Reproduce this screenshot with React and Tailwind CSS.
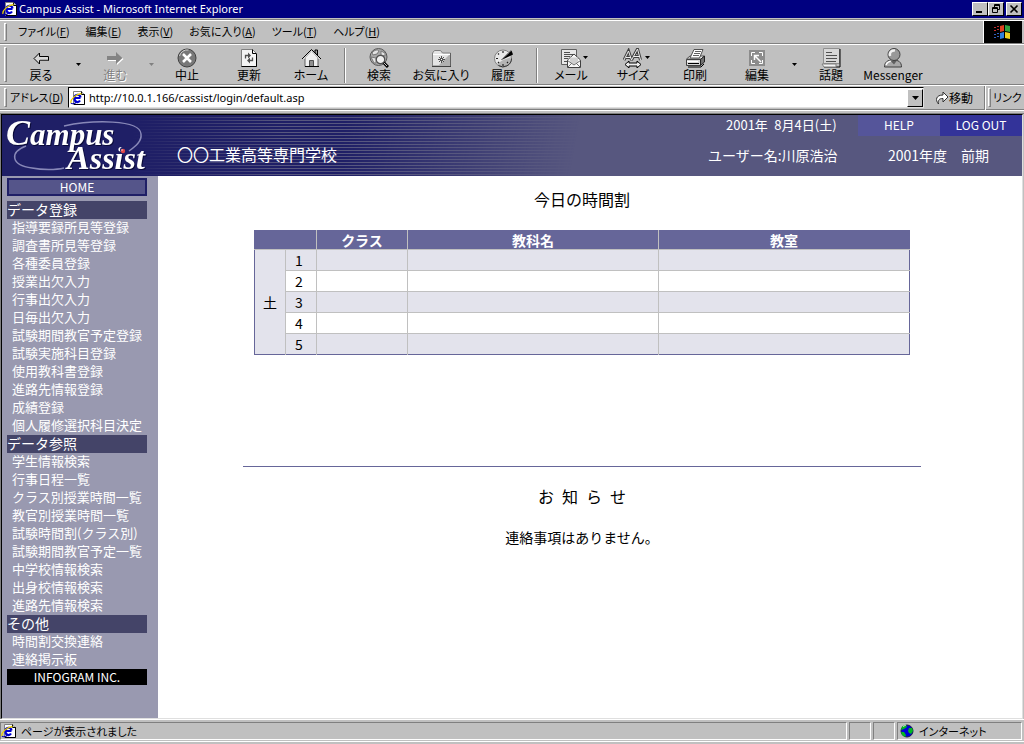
import React from 'react';

const entrySections = [
  {
    title: 'データ登録',
    items: [
      '指導要録所見等登録',
      '調査書所見等登録',
      '各種委員登録',
      '授業出欠入力',
      '行事出欠入力',
      '日毎出欠入力',
      '試験期間教官予定登録',
      '試験実施科目登録',
      '使用教科書登録',
      '進路先情報登録',
      '成績登録',
      '個人履修選択科目決定',
    ],
  },
  {
    title: 'データ参照',
    items: [
      '学生情報検索',
      '行事日程一覧',
      'クラス別授業時間一覧',
      '教官別授業時間一覧',
      '試験時間割(クラス別)',
      '試験期間教官予定一覧',
      '中学校情報検索',
      '出身校情報検索',
      '進路先情報検索',
    ],
  },
  { title: 'その他', items: ['時間割交換連絡', '連絡掲示板'] },
];

const menus = [
  ['ファイル', 'F'],
  ['編集', 'E'],
  ['表示', 'V'],
  ['お気に入り', 'A'],
  ['ツール', 'T'],
  ['ヘルプ', 'H'],
];

function PageIcon() {
  return (
    <svg className="size-4 shrink-0" viewBox="0 0 16 16" aria-hidden="true">
      <path d="M3.5 1.500h8l3 3v10h-11z" fill="#fff" stroke="#808080" />
      <path d="M14.500 4v10.500H4" fill="none" stroke="#000" />
      <path d="M11.500 1.500v3h3" fill="#c0c0c0" stroke="#000" />
      <path d="M10.500 8H4.500c0-4 5.500-4.500 6-.5M10 10.500c-1.500 2.500-5.500 2-5.500-2" fill="none" stroke="#0000d0" strokeWidth="2.200" />
      <path d="M1 13C0 9.500 6 4 11.500 3.500" fill="none" stroke="#e8d000" strokeWidth="1.300" />
      <path d="M1 13c1 1.500 4 .5 5-.5" fill="none" stroke="#0000a0" strokeWidth="1.200" />
    </svg>
  );
}

function Globe() {
  return (
    <svg className="size-4 shrink-0" viewBox="0 0 16 16" aria-hidden="true">
      <circle cx="8" cy="8" r="6" fill="#0000d8" stroke="#202040" />
      <path d="M3 3.500 7 2l1 2-3 2-3 1zM10 5l3 0 1 3-2 3-2-1-1-2zM2 9l3 0 2 3-1 2-3-2z" fill="#00b820" />
      <path d="M4 3.500 7 2" stroke="#c8f0c8" />
    </svg>
  );
}

const icons = {
  back: (
    <>
      <path d="M3 10.500 8.500 5v3.500h9v4h-9V16z" fill="#d8d8d8" stroke="#000" />
      <path d="M9 12h8" stroke="#808080" />
    </>
  ),
  forward: (
    <>
      <path d="M3 9h9V5l6.500 6-6.500 6v-4H3z" fill="#fff" />
      <path d="M2 8h9V4l6.500 6-6.500 6v-4H2z" fill="#848484" />
    </>
  ),
  stop: (
    <>
      <circle cx="10" cy="10" r="9" fill="#787878" stroke="#404040" />
      <path d="M2.500 8a8 8 0 0 1 9-6" fill="none" stroke="#d0d0d0" />
      <path d="m6 6 8 8M14 6l-8 8" stroke="#fff" strokeWidth="2.500" />
    </>
  ),
  refresh: (
    <>
      <path d="M2.500 1.500h11l4 4v13h-15z" fill="#f4f4f4" stroke="#808080" />
      <path d="M13.500 1.500v4h4M17.500 6v12.500h-15" fill="none" stroke="#000" />
      <path d="M6.500 10.500v-3h3M13.500 9.500v3h-3" fill="none" stroke="#505050" strokeWidth="1.300" />
      <path d="m9 4.500 3 3-3 3zM11 9.500l-3 3 3 3z" fill="#505050" />
    </>
  ),
  home: (
    <>
      <path d="M14 2h2.500v5L14 5z" fill="#a0a0a0" stroke="#000" />
      <path d="M4 10v8.500h13V10l-6.500-7z" fill="#f0f0f0" stroke="#606060" />
      <path d="M1 11 10.500 1.500 20 11" fill="none" stroke="#000" />
      <path d="M2.500 11 10.500 3l8 8" fill="none" stroke="#fff" />
      <path d="M8.500 18.500v-6h4v6z" fill="#909090" stroke="#505050" />
      <path d="M4 18.500h14" stroke="#000" />
    </>
  ),
  search: (
    <>
      <circle cx="9.500" cy="9" r="8.500" fill="#a8a8a8" stroke="#585858" />
      <path d="M3 5c2-3 6-4 7-2L8 6l-4 1zM2 9l5 1 0 5-2 0zM12 3l4 2v3l-4-1z" fill="#e4e4e4" stroke="#787878" />
      <path d="m14 14 5 5" stroke="#000" strokeWidth="3" />
      <path d="m14 14 4 4" stroke="#c8c8c8" />
      <circle cx="11.500" cy="11.500" r="4.200" fill="#f0f0f0" stroke="#505050" strokeWidth="1.200" />
    </>
  ),
  favorites: (
    <>
      <path d="M1.500 18V5l2-2.500h6l2 2.500h8v13z" fill="#e4e4e4" stroke="#808080" />
      <path d="m19 6-12 12h12z" fill="#b0b0b0" />
      <path d="M1 18.500h19V5" fill="none" stroke="#404040" />
      <path d="M2 6.500h17" stroke="#fff" />
      <path d="M10.500 8v7M7 11.500h7M8 9l5 5M13 9l-5 5" stroke="#404040" strokeWidth="0.900" />
      <path d="M10 11h1v1h-1z" fill="#fff" />
    </>
  ),
  history: (
    <>
      <circle cx="10" cy="10.500" r="8.500" fill="#e8e8e8" stroke="#808080" />
      <path d="M17 16a9 9 0 0 1-13 0l6-4 8-3z" fill="#b4b4b4" />
      <path d="M10 3v2M3 10.500h2M5 5.500l1 1M5 15l1-1M10 16v2M15 15l-1-1" stroke="#202020" strokeWidth="1.200" />
      <path d="m8.500 12 10-9.500 1.500 4z" fill="#000" />
      <path d="m8 12 10-10" stroke="#909090" />
      <path d="M18.500 10.500a8.500 8.500 0 0 1-13 7" fill="none" stroke="#303030" />
    </>
  ),
  mail: (
    <>
      <path d="M.5 1.500h15v15H.5z" fill="#e8e8e8" stroke="#606060" />
      <path d="M3 4.500h6M3 6.500h9M3 8.500h6M3 10.500h4M3 13.500h3" stroke="#505050" />
      <path d="m6.500 12 6.500-6 6.500 6v7.500h-13z" fill="#f8f8f8" stroke="#404040" />
      <path d="M9 9.500h8v4l-4 3-4-3z" fill="#d0d0d0" />
      <path d="m6.500 12.500 6.500 4.500 6.500-4.500M7 19l4-4M19 19l-4-4" fill="none" stroke="#707070" />
    </>
  ),
  size: (
    <>
      <path d="m1 12 4.500-9 3 9M3 9.500h5M8.500 12l6-11 3 11M11 8.500h6" fill="none" stroke="#404040" strokeWidth="3" />
      <path d="m1 12 4.500-9 3 9M3 9.500h5M8.500 12l6-11 3 11M11 8.500h6" fill="none" stroke="#eee" />
      <path d="m2 16.500 4-3.500v2h8v-2l4 3.500-4 3.500v-2H6v2z" fill="#eee" stroke="#000" />
    </>
  ),
  print: (
    <>
      <path d="M1.500 11 5 8h14l-3 3z" fill="#f0f0f0" stroke="#505050" />
      <path d="M1.500 11.500h14v6h-14z" fill="#d8d8d8" stroke="#404040" />
      <path d="m15.500 11.500 4-3.500v6l-4 3.500z" fill="#707070" stroke="#202020" />
      <path d="M5 10 9 1.500h9L14.500 10z" fill="#fff" stroke="#505050" />
      <path d="M10 3.500h6M9 5.500h6M8 7.500h6" stroke="#606060" />
      <path d="M3 15.500h11M3 19h13l3-3" fill="none" stroke="#000" />
      <path d="M2 13.500h11" stroke="#fff" />
    </>
  ),
  edit: (
    <>
      <path d="M2 2h16v16H2z" fill="#8c8c8c" />
      <path d="M4.500 8V4.500H8M12 4.500h3.500V8M15.500 12v3.500H12M8 15.500H4.500V12" fill="none" stroke="#fff" />
      <path d="M7.500 12V7.500H12M7.500 7.500 14 14" fill="none" stroke="#fff" strokeWidth="1.500" />
    </>
  ),
  discuss: (
    <>
      <path d="M2.500.5h16v15h-16z" fill="#d8d8d8" stroke="#909090" />
      <path d="M19 1v18H3" fill="none" stroke="#000" />
      <path d="M1 16h14v3H3z" fill="#f4f4f4" stroke="#808080" />
      <path d="M5 4.500h6M5 7.500h11M5 10.500h11M5 13.500h10" stroke="#505050" />
    </>
  ),
  messenger: (
    <>
      <path d="M1.500 19c0-5 3-7 8.500-7s8.500 2 8.500 7z" fill="#a8a8a8" stroke="#404040" />
      <path d="M3 17c1-3 3-4 7-4" fill="none" stroke="#fff" strokeWidth="1.500" />
      <path d="M7 12.500h7l-3 4z" fill="#606060" />
      <circle cx="11" cy="6.500" r="6" fill="#989898" stroke="#404040" />
      <path d="M7 8c-1-4 2-6 5-5.500" fill="none" stroke="#f0f0f0" strokeWidth="2.500" />
    </>
  ),
};

function Caret({ className = 'fill-black' }) {
  return (
    <svg className={`h-[3px] w-[5px] ${className}`} viewBox="0 0 5 3" aria-hidden="true">
      <path d="M0 0h5L2.500 3z" />
    </svg>
  );
}

function Tool({ icon, label, disabled, caret }) {
  return (
    <button type="button" disabled={disabled} className="flex w-[62px] shrink-0 flex-col items-center">
      <span className="relative">
        <svg className="size-5" viewBox="0 0 20 20" aria-hidden="true">{icons[icon]}</svg>
        {caret && (
          <span className="absolute top-2 left-[22px] flex">
            <Caret />
          </span>
        )}
      </span>
      <span
        className={
          disabled
            ? 'text-xs leading-[14px] whitespace-nowrap text-[#808080] [font-feature-settings:"palt"] [text-shadow:1px_1px_#fff]'
            : 'text-xs leading-[14px] whitespace-nowrap [font-feature-settings:"palt"]'
        }
      >
        {label}
      </span>
    </button>
  );
}

function DropArrow({ label, width, disabled }) {
  return (
    <button type="button" aria-label={label} disabled={disabled} className={`flex shrink-0 items-center justify-center pb-1 ${width}`}>
      <Caret className={disabled ? 'fill-[#808080]' : 'fill-black'} />
    </button>
  );
}

function Divider() {
  return <div className="mx-[2px] h-[35px] w-[2px] shrink-0 border-r border-l border-r-white border-l-[#808080]" />;
}

function Grip() {
  return <div className="my-[2px] w-[3px] shrink-0 self-stretch border border-t-white border-r-[#808080] border-b-[#808080] border-l-white" />;
}

function Band({ children, className }) {
  return (
    <div className="border-t border-[#808080]">
      <div className={`flex border-t border-white pl-1 ${className}`}>{children}</div>
    </div>
  );
}

function WindowButton({ label, children }) {
  return (
    <button
      type="button"
      aria-label={label}
      className="h-[14px] w-4 border border-t-white border-r-black border-b-black border-l-white bg-[#c0c0c0]"
    >
      <svg className="h-3 w-[14px]" viewBox="0 0 14 12" fill="none" stroke="#000" aria-hidden="true">{children}</svg>
    </button>
  );
}

function Logo() {
  return (
    <svg className="h-[61px] w-[150px] shrink-0" viewBox="0 0 150 61" role="img" aria-label="Campus Assist">
      <path d="M62 11C90 5 138 4 139 19c1 7-5 12-12 17" fill="none" stroke="#8888b8" strokeWidth="1.500" />
      <path d="M24 31C8 37 8 50 30 53c10 2 24 2 32 0" fill="none" stroke="#8888b8" strokeWidth="1.500" />
      <g className="font-['Liberation_Serif',serif] font-bold italic drop-shadow-[1px_1px_0_#0a0a38]" fill="#fff">
        <text x="4" y="30" fontSize="36">
          C<tspan fontSize="31">ampus</tspan>
        </text>
        <text x="65" y="54" fontSize="34">
          A<tspan fontSize="32">ssist</tspan>
        </text>
      </g>
      <circle cx="121" cy="35" r="3" fill="#1f1f66" />
      <circle cx="121" cy="36" r="2.200" fill="#e04848" />
      <circle cx="120" cy="35" r="0.800" fill="#ffd0d0" />
    </svg>
  );
}

function BrowserChrome() {
  return (
    <header>
      <div className="flex h-[18px] items-center bg-[#000080] pr-[2px] pl-[2px] text-white">
        <PageIcon />
        <h1 className="ml-px flex-1 font-['Noto_Sans','Noto_Sans_CJK_JP',sans-serif] text-[11px] leading-4">
          Campus Assist - Microsoft Internet Explorer
        </h1>
        <WindowButton label="最小化">
          <path d="M3 9h6" strokeWidth="2" />
        </WindowButton>
        <WindowButton label="元に戻す">
          <path d="M5.500 4.500v-3h5v5h-2M5 2.500h6M3.500 4.500h5v5h-5zM3 5.500h6" />
        </WindowButton>
        <span className="w-[2px]" />
        <WindowButton label="閉じる">
          <path d="m3.500 2.500 7 7m0-7-7 7" strokeWidth="1.600" />
        </WindowButton>
      </div>
      <div className="pt-px">
        <Band className="h-[23px] items-center">
          <Grip />
          <nav className="flex flex-1 items-center gap-4 pb-[2px] pl-[11px]">
            {menus.map(([name, key]) => (
              <button key={key} type="button" className="text-[11px] leading-5 whitespace-nowrap [font-feature-settings:'palt']">
                {name}(<u>{key}</u>)
              </button>
            ))}
          </nav>
          <div className="mr-[2px] flex w-[39px] items-center justify-center self-stretch border-l border-white bg-black">
            <svg className="h-4 w-5" viewBox="0 0 20 16" aria-hidden="true">
              <path d="m7 2 4-1v6L7 8z" fill="#e04020" />
              <path d="m12 1 5 1v6l-5-1z" fill="#30a040" />
              <path d="m7 9 4-1v6l-4 1z" fill="#3080e0" />
              <path d="m12 8 5 1v6l-5-1z" fill="#f0d020" />
              <path d="M1 3.500h2m1-1h2M1 6.500h2m1-1h2" stroke="#c03030" />
              <path d="M1 10.500h2m1-1h2M1 13.500h2m1-1h2" stroke="#3060c0" />
            </svg>
          </div>
        </Band>
        <Band className="h-10">
          <Grip />
          <div className="flex flex-1 items-stretch overflow-hidden pt-[3px] pl-[3px]">
            <Tool icon="back" label="戻る" />
            <DropArrow label="戻る履歴" width="w-3" />
            <Tool icon="forward" label="進む" disabled />
            <DropArrow label="進む履歴" width="w-[10px]" disabled />
            <Tool icon="stop" label="中止" />
            <Tool icon="refresh" label="更新" />
            <Tool icon="home" label="ホーム" />
            <Divider />
            <Tool icon="search" label="検索" />
            <Tool icon="favorites" label="お気に入り" />
            <Tool icon="history" label="履歴" />
            <Divider />
            <Tool icon="mail" label="メール" caret />
            <Tool icon="size" label="サイズ" caret />
            <Tool icon="print" label="印刷" />
            <Tool icon="edit" label="編集" />
            <DropArrow label="編集の一覧" width="w-3" />
            <Tool icon="discuss" label="話題" />
            <Tool icon="messenger" label="Messenger" />
          </div>
        </Band>
        <Band className="h-6 items-center">
          <Grip />
          <label htmlFor="address" className="w-[61px] pl-[3px] text-[11px] whitespace-nowrap [font-feature-settings:'palt']">
            アドレス(<u>D</u>)
          </label>
          <div className="flex h-[21px] flex-1 items-center border border-t-black border-r-[#dfdfdf] border-b-[#dfdfdf] border-l-black bg-white pl-px">
            <PageIcon />
            <input
              id="address"
              type="text"
              defaultValue="http://10.0.1.166/cassist/login/default.asp"
              className="ml-[3px] min-w-0 flex-1 font-['Noto_Sans','Noto_Sans_CJK_JP',sans-serif] text-[11px] leading-4 outline-none"
            />
            <button
              type="button"
              aria-label="アドレスの一覧"
              className="flex h-[18px] w-4 items-center justify-center border border-t-white border-r-black border-b-black border-l-white bg-[#c0c0c0]"
            >
              <svg className="h-1 w-[7px]" viewBox="0 0 7 4" aria-hidden="true">
                <path d="M0 0h7L3.500 4z" />
              </svg>
            </button>
          </div>
          <button type="button" className="flex w-[60px] items-center justify-center text-xs">
            <svg className="size-[14px]" viewBox="0 0 14 14" aria-hidden="true">
              <path d="M3.500 13C0 9 1 4 8 4V1l5 5-5 5V7.500C4 7.500 3 9 3.500 13z" fill="#fff" stroke="#303030" />
            </svg>
            移動
          </button>
          <div className="h-6 w-[2px] border-r border-l border-r-white border-l-[#808080]" />
          <div className="flex items-center self-stretch pl-[2px]">
            <Grip />
            <span className="w-[33px] pl-[2px] text-[11px] whitespace-nowrap [font-feature-settings:'palt']">リンク</span>
          </div>
        </Band>
        <div className="h-[4px] border-t border-b border-t-[#808080] border-b-[#c0c0c0] bg-white bg-clip-padding">
          <div className="mt-px h-px bg-[#c0c0c0]" />
        </div>
      </div>
    </header>
  );
}

function Banner() {
  return (
    <div className="relative isolate flex h-[61px] bg-[#57577f] text-white">
      <div className="absolute inset-0 -z-10 bg-[repeating-linear-gradient(to_bottom,#1f1f66_0_2px,transparent_2px_3px)] [mask-image:linear-gradient(100deg,#000_340px,transparent_570px)]" />
      <div className="absolute inset-0 -z-10 bg-[linear-gradient(90deg,#1f1f66_130px,transparent_280px)]" />
      <Logo />
      <p className="flex-1 pt-[27px] pl-[25px] text-base leading-6 whitespace-nowrap">〇〇工業高等専門学校</p>
      <div className="w-[316px] shrink-0">
        <div className="flex h-[21px] text-[13px] leading-[19px]">
          <p className="w-[152px] pl-[20px] whitespace-nowrap">2001年&ensp;8月4日(土)</p>
          <a href="#help" className="w-[82px] bg-[#55559a] text-center text-xs leading-[20px]">HELP</a>
          <a href="#logout" className="w-[82px] bg-[#333399] text-center text-xs leading-[20px]">LOG OUT</a>
        </div>
        <div className="flex pt-[9px] text-sm leading-5 whitespace-nowrap">
          <p className="w-[182px] pl-[2px]">ユーザー名:川原浩治</p>
          <p>2001年度　前期</p>
        </div>
      </div>
    </div>
  );
}

function Sidebar() {
  return (
    <nav className="w-[156px] shrink-0 bg-[#9999b0] pt-[2px] pr-[11px] pl-[5px] text-white">
      <a href="#home" className="mb-[5px] block h-[18px] border-2 border-[#1f1f66] bg-[#55558a] text-center text-xs leading-[13px]">
        HOME
      </a>
      {entrySections.map((section) => (
        <section key={section.title}>
          <h2 className="h-[18px] bg-[#444468] text-sm leading-4">{section.title}</h2>
          <ul>
            {section.items.map((item) => (
              <li key={item} className="h-[18px] pl-[5px] text-[13px] leading-4 whitespace-nowrap">
                <a href="#menu">{item}</a>
              </li>
            ))}
          </ul>
        </section>
      ))}
      <p className="h-4 bg-black text-center text-xs leading-4">INFOGRAM INC.</p>
    </nav>
  );
}

function Timetable() {
  const head = 'border-x border-[#c0c0c0] p-0 font-bold';
  return (
    <table className="mt-[19px] w-full max-w-[656px] table-fixed border-collapse border border-[#666699] text-sm leading-[18px]">
      <colgroup>
        <col className="w-[31px]" />
        <col className="w-[31px]" />
        <col className="w-[91px]" />
        <col />
        <col />
      </colgroup>
      <thead>
        <tr className="h-[19px] border-b border-b-[#c0c0c0] bg-[#666699] text-white">
          <th colSpan={2} aria-label="曜日と時限" className="p-0" />
          <th className={head}>クラス</th>
          <th className={head}>教科名</th>
          <th className="p-0 font-bold">教室</th>
        </tr>
      </thead>
      <tbody>
        {[1, 2, 3, 4, 5].map((n) => (
          <tr key={n} className="h-[21px] odd:bg-[#e3e3ec]">
            {n === 1 && (
              <th rowSpan={5} className="bg-[#e3e3ec] p-0 font-normal">土</th>
            )}
            <th className="border-x border-t border-[#c0c0c0] p-0 pr-1 font-normal">{n}</th>
            <td className="border-x border-t border-[#c0c0c0] p-0" />
            <td className="border-x border-t border-[#c0c0c0] p-0" />
            <td className="border-t border-l border-[#c0c0c0] p-0" />
          </tr>
        ))}
      </tbody>
    </table>
  );
}

function StatusBar() {
  const pane = 'flex h-[18px] items-center border border-t-[#808080] border-r-white border-b-white border-l-[#808080]';
  return (
    <footer className="border-t border-white bg-[#c0c0c0] pt-[2px]">
      <div className="flex gap-[2px] pr-[2px] text-[11px] [font-feature-settings:'palt']">
        <div className={`${pane} flex-1 gap-1`}>
          <PageIcon />
          <span>ページが表示されました</span>
        </div>
        <div className={`${pane} w-[22px]`} />
        <div className={`${pane} w-[22px]`} />
        <div className={`${pane} w-[125px] gap-1 pl-px`}>
          <Globe />
          <span>インターネット</span>
        </div>
      </div>
      <div className="mt-px mb-[2px] h-px bg-white" />
    </footer>
  );
}

export default function App() {
  return (
    <div className="flex min-h-screen flex-col bg-[#c0c0c0] font-['Noto_Sans_CJK_JP','Liberation_Sans',sans-serif] text-black">
      <BrowserChrome />
      <div className="flex flex-1 flex-col border-t border-l border-[#808080] pr-px">
        <div className="flex flex-1 flex-col border border-t-black border-r-[#dfdfdf] border-b-[#dfdfdf] border-l-black">
          <Banner />
          <div className="flex flex-1">
            <Sidebar />
            <main className="flex min-w-0 flex-1 flex-col items-center bg-white pt-[11px] pr-4">
              <h2 className="text-base leading-6">今日の時間割</h2>
              <Timetable />
              <hr className="mt-[111px] w-4/5 border-t border-[#666699]" />
              <h2 className="mt-[17px] text-base leading-6">お&ensp;知&ensp;ら&ensp;せ</h2>
              <p className="mt-[19px] text-sm leading-5">連絡事項はありません。</p>
            </main>
          </div>
        </div>
      </div>
      <StatusBar />
    </div>
  );
}
